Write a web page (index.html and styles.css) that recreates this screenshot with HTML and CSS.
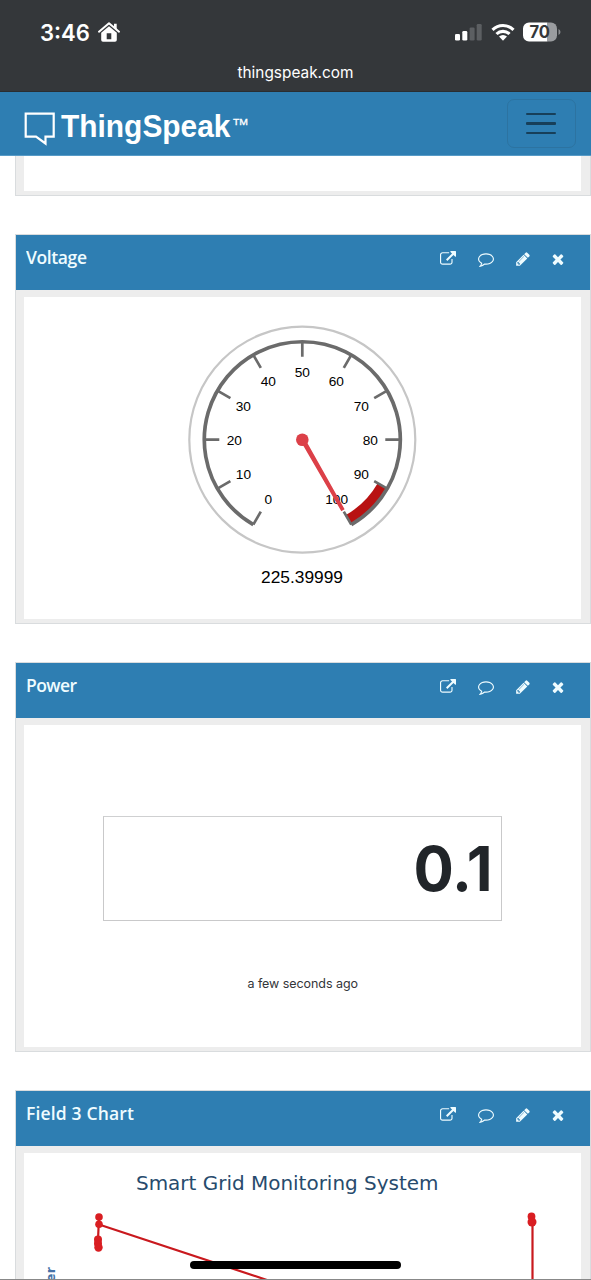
FILE: index.html
```html
<!DOCTYPE html>
<html lang="en">
<head>
<meta charset="utf-8">
<title>ThingSpeak</title>
<link rel="stylesheet" href="styles.css">
</head>
<body>
<svg class="defs" aria-hidden="true">
  <symbol id="i-ext" viewBox="0 0 1792 1792"><path d="M1408 928v320q0 119-84.500 203.500t-203.500 84.500h-832q-119 0-203.500-84.500t-84.500-203.500v-832q0-119 84.500-203.500t203.500-84.500h704q14 0 23 9t9 23v64q0 14-9 23t-23 9h-704q-66 0-113 47t-47 113v832q0 66 47 113t113 47h832q66 0 113-47t47-113v-320q0-14 9-23t23-9h64q14 0 23 9t9 23zm384-864v512q0 26-19 45t-45 19-45-19l-176-176-652 652q-10 10-23 10t-23-10l-114-114q-10-10-10-23t10-23l652-652-176-176q-19-19-19-45t19-45 45-19h512q26 0 45 19t19 45z"/></symbol>
  <symbol id="i-comment" viewBox="0 0 1792 1792"><path d="M896 384q-204 0-381.500 69.500t-282 187.500-104.500 255q0 112 71.500 213.500t201.500 175.500l87 50-27 96q-24 91-70 172 152-63 275-171l43-38 57 6q69 8 130 8 204 0 381.500-69.500t282-187.500 104.500-255-104.500-255-282-187.500-381.500-69.500zm896 512q0 174-120 321.500t-326 233-450 85.500q-70 0-145-8-198 175-460 242-49 14-114 22h-5q-15 0-27-10.500t-16-27.500v-1q-3-4-.5-12t2-10 4.500-9.500l6-9 7-8.500 8-9q7-8 31-34.500t34.500-38 31-39.500 32.500-51 27-59 26-76q-157-89-247.500-220t-90.500-281q0-174 120-321.500t326-233 450-85.500 450 85.500 326 233 120 321.500z"/></symbol>
  <symbol id="i-pencil" viewBox="0 0 1792 1792"><path d="M491 1536l91-91-235-235-91 91v107h128v128h107zm523-928q0-22-22-22-10 0-17 7l-542 542q-7 7-7 17 0 22 22 22 10 0 17-7l542-542q7-7 7-17zm-54-192l416 416-832 832h-416v-416zm683 96q0 53-37 90l-166 166-416-416 166-165q36-38 90-38 53 0 91 38l235 234q37 39 37 91z"/></symbol>
  <symbol id="i-close" viewBox="0 0 1792 1792"><path d="M1490 1322q0 40-28 68l-136 136q-28 28-68 28t-68-28l-294-294-294 294q-28 28-68 28t-68-28l-136-136q-28-28-28-68t28-68l294-294-294-294q-28-28-28-68t28-68l136-136q28-28 68-28t68 28l294 294 294-294q28-28 68-28t68 28l136 136q28 28 28 68t-28 68l-294 294 294 294q28 28 28 68z"/></symbol>
</svg>

<header class="status">
  <div class="status-row">
    <div class="clock">
      <svg class="time" width="52" height="26"><text x="1" y="18.500" textLength="50" lengthAdjust="spacingAndGlyphs">3:46</text></svg>
      <svg class="home" viewBox="0 0 22 20" width="22" height="20"><path d="M1 9.700 11 1.300l10 8.400" fill="none" stroke="#fff" stroke-width="2" stroke-linecap="round" stroke-linejoin="round"/><path d="M16 1.800h2.700v6L16 5.500z" fill="#fff"/><path fill-rule="evenodd" d="M11 4.300 3.200 10.800V18q0 1.800 1.800 1.800h12q1.800 0 1.800-1.800v-7.200zM8.700 11.200h4.600v6H8.700z" fill="#fff"/></svg>
    </div>
    <div class="indicators">
      <svg width="27" height="18" viewBox="0 0 27 18"><rect x="0" y="11" width="5" height="6.500" rx="1.300" fill="#fff"/><rect x="7.300" y="8" width="5" height="9.500" rx="1.300" fill="#fff"/><rect x="14.600" y="4.500" width="5" height="13" rx="1.300" fill="#5c5f62"/><rect x="21.700" y="1" width="5" height="16.500" rx="1.300" fill="#5c5f62"/></svg>
      <svg class="wifi" width="24" height="18" viewBox="0 0 24 18"><g fill="none" stroke="#fff" stroke-width="3.100"><path d="M1.500 6.800a15 15 0 0 1 21 0"/><path d="M5.500 11a9.300 9.300 0 0 1 13 0"/></g><path d="M8 13.500a5.900 5.900 0 0 1 8 0L12 17.700z" fill="#fff"/></svg>
      <svg class="battery" width="38" height="20" viewBox="0 0 38 20"><path d="M6 .5h18.500v19H6a6 6 0 0 1-6-6v-7a6 6 0 0 1 6-6z" fill="#fff"/><path d="M24.500.5H28a6 6 0 0 1 6 6v7a6 6 0 0 1-6 6h-3.500z" fill="#9a9c9f"/><path d="M35.500 7q2 .8 2 3t-2 3z" fill="#8b8d90"/><text x="6.500" y="16" textLength="20.500" lengthAdjust="spacingAndGlyphs">70</text></svg>
    </div>
  </div>
  <div class="address"><svg width="117" height="22"><text x="0.500" y="15.500" textLength="116" lengthAdjust="spacingAndGlyphs">thingspeak.com</text></svg></div>
</header>

<nav class="navbar">
  <svg class="logo" width="230" height="42" viewBox="0 0 230 42">
    <path d="M1.700 5.700h28v23h-8.200v6.800L12 28.700H1.700z" fill="none" stroke="#fff" stroke-width="2.200"/>
    <text class="logo-name" x="37" y="28.700" textLength="169.500" lengthAdjust="spacingAndGlyphs">ThingSpeak</text>
    <text class="logo-tm" x="209" y="16.500" textLength="15" lengthAdjust="spacingAndGlyphs">TM</text>
  </svg>
  <button class="toggler" aria-label="Menu"><span class="bar"></span><span class="bar"></span><span class="bar"></span></button>
</nav>

<main class="page">
  <section class="panel panel-previous"><div class="panel-body"></div></section>

  <section class="panel">
    <div class="panel-head">
      <svg class="title" width="200" height="26"><text x="0" y="18.500" textLength="61">Voltage</text></svg>
      <div class="tools"><svg><use href="#i-ext"/></svg><svg><use href="#i-comment"/></svg><svg><use href="#i-pencil"/></svg><svg class="close"><use href="#i-close"/></svg></div>
    </div>
    <div class="panel-body">
      <svg class="gauge" viewBox="24 297 557 323" width="557" height="323">
        <circle cx="302.300" cy="439.700" r="113" fill="none" stroke="#c6c6c6" stroke-width="2.200"/>
        <g transform="translate(302.300 439.700)">
          <path d="M84.200 48.600A97.200 97.200 0 0 1 48.600 84.200L43.500 75.400A87 87 0 0 0 75.400 43.500z" fill="#b81212"/>
          <g fill="none" stroke="#6b6b6b">
            <path stroke-width="3.700" d="M-49 84.900A98 98 0 1 1 49 84.900"/>
            <path stroke-width="2.700" d="M-49 84.900-41.500 71.900M-84.900 49-71.900 41.500M-98 0H-83M-84.900-49-71.900-41.500M-49-84.900-41.500-71.900M0-98V-83M49-84.900 41.500-71.900M84.900-49 71.900-41.500M98 0H83M84.900 49 71.900 41.500M49 84.900 41.500 71.900"/>
          </g>
          <g class="ticks">
            <text x="-34" y="64.200">0</text><text x="-58.900" y="39">10</text><text x="-68" y="5">20</text><text x="-59" y="-29">30</text><text x="-34" y="-54">40</text><text x="0" y="-63">50</text><text x="34" y="-54">60</text><text x="59" y="-29">70</text><text x="68" y="5">80</text><text x="59" y="39">90</text><text x="34.300" y="64.200">100</text>
          </g>
          <path d="M-1.200.7 39.300 70.500 41.300 69.300 1.800-1z" fill="#dc4048" stroke="#dc4048" stroke-width="1.500"/>
          <circle r="6.300" fill="#dc4048"/>
        </g>
        <text class="reading" x="302" y="582.500" textLength="82" lengthAdjust="spacingAndGlyphs">225.39999</text>
      </svg>
    </div>
  </section>

  <section class="panel">
    <div class="panel-head">
      <svg class="title" width="200" height="26"><text x="0" y="18.500" textLength="51">Power</text></svg>
      <div class="tools"><svg><use href="#i-ext"/></svg><svg><use href="#i-comment"/></svg><svg><use href="#i-pencil"/></svg><svg class="close"><use href="#i-close"/></svg></div>
    </div>
    <div class="panel-body numeric">
      <div class="display"><svg width="90" height="80"><text x="8.500" y="61.500" textLength="79" lengthAdjust="spacingAndGlyphs">0.1</text></svg></div>
      <svg class="ago" width="112" height="20"><text x="0.500" y="14.500" textLength="110.500">a few seconds ago</text></svg>
    </div>
  </section>

  <section class="panel">
    <div class="panel-head">
      <svg class="title" width="200" height="26"><text x="0" y="18.500" textLength="108">Field 3 Chart</text></svg>
      <div class="tools"><svg><use href="#i-ext"/></svg><svg><use href="#i-comment"/></svg><svg><use href="#i-pencil"/></svg><svg class="close"><use href="#i-close"/></svg></div>
    </div>
    <div class="panel-body">
      <svg class="chart" viewBox="24 1153 557 323" width="557" height="323">
        <text class="chart-title" x="136" y="1190" textLength="302.500" lengthAdjust="spacingAndGlyphs">Smart Grid Monitoring System</text>
        <g fill="none" stroke="#c9191e" stroke-width="2.200"><path d="M98 1246V1240L99 1217V1224.500L267 1280 532.500 1366V1217"/></g>
        <g fill="#d91e22"><circle cx="99" cy="1217" r="3.800"/><circle cx="99" cy="1224.300" r="3.800"/><circle cx="98" cy="1239.500" r="4"/><circle cx="98" cy="1243.500" r="4"/><circle cx="98.500" cy="1247.500" r="4.200"/><circle cx="531.500" cy="1216.500" r="3.900"/><circle cx="532" cy="1222" r="4.500"/></g>
        <text class="axis" transform="translate(54.500 1312) rotate(-90)" textLength="45">Power</text>
      </svg>
    </div>
  </section>
</main>
<div class="home-indicator"></div>
<div class="edge"></div>
</body>
</html>
```
FILE: styles.css
```css
* { box-sizing: border-box; }
body { margin: 0; width: 591px; height: 1280px; overflow: hidden; background: #fff; position: relative; display: flex; flex-direction: column; font-family: Inter, sans-serif; }
svg { display: block; flex: none; }
.defs { position: absolute; width: 0; height: 0; }
.status { flex: none; height: 92px; background: #34373a; border-bottom: 1px solid #292e32; color: #fff; }
.status-row { display: flex; justify-content: space-between; padding: 22px 32px 0 39px; height: 62px; }
.status text { fill: #fff; }
.clock { display: flex; gap: 7px; }
.time text { font-size: 23px; font-weight: 600; }
.indicators { display: flex; padding-top: 1px; }
.wifi { margin-left: 9px; }
.battery { margin: -1px -2px 0 8px; }
.battery text { font-size: 17px; font-weight: 700; fill: #34373a; }
.address { display: flex; justify-content: center; font-size: 15.5px; }
.navbar { flex: none; height: 64px; background: #2e7eb2; border-bottom: 1px solid #579bc7; display: flex; justify-content: space-between; padding: 7px 15px 0 24px; }
.logo { margin-top: 9px; }
.logo text { fill: #fff; font-family: "Liberation Sans", Arial, sans-serif; }
.logo-name { font-size: 31.5px; font-weight: 700; }
.logo-tm { font-size: 9.5px; stroke: #fff; stroke-width: 0.3px; }
.toggler { width: 69px; height: 49px; border: 1px solid #2c73a1; border-radius: 7px; background: none; padding: 0 1px 0 0; display: flex; flex-direction: column; align-items: center; justify-content: center; gap: 7.500px; }
.bar { width: 30px; height: 2.300px; background: #173f59; border-radius: 1px; }
.page { flex: 1; min-height: 0; overflow: hidden; display: flex; flex-direction: column; gap: 38px; padding-left: 15px; }
.panel { flex: none; width: 576px; height: 390px; background: #ededed; border: 1px solid #d9dcde; display: flex; flex-direction: column; }
.panel-previous { height: 40px; border-top: 0; }
.panel-previous .panel-body { height: 35px; margin-top: 0; }
.panel-head { height: 55px; background: #2e7eb2; display: flex; justify-content: space-between; padding: 10px 24px 0 10px; flex: none; }
.title text { fill: #effcff; font-family: "Open Sans", sans-serif; font-size: 17.5px; font-weight: 600; }
.tools { display: flex; gap: 21px; padding-top: 6px; }
.tools svg { width: 16px; height: 16px; fill: #effcff; }
.tools svg:first-child { margin-right: 1px; }
.tools .close { margin-left: -2px; }
.panel-body { margin: 7px 9px 0 8px; height: 322px; background: #fff; flex: none; overflow: hidden; }
.gauge text { text-anchor: middle; font-family: "Liberation Sans", Arial, sans-serif; fill: #000; }
.ticks { font-size: 13.7px; }
.reading { font-size: 17.2px; }
.numeric { display: flex; flex-direction: column; align-items: center; padding-top: 91px; }
.display { width: 399px; height: 105px; border: 1px solid #c9c9ca; border-top-color: #cfd0d1; display: flex; justify-content: flex-end; align-items: center; padding-right: 6px; }
.display text { font-size: 62px; font-weight: 700; fill: #212529; }
.ago { margin-top: 52px; }
.ago text { font-size: 12.5px; fill: #333639; }
.chart text { font-family: "DejaVu Sans", Verdana, sans-serif; }
.chart-title { font-size: 19.5px; fill: #274b6d; }
.chart .axis { font-size: 12.5px; font-weight: 700; fill: #4572a7; }
.home-indicator { position: absolute; left: 190px; top: 1261px; width: 211px; height: 8px; border-radius: 4px; background: #000; }
.edge { position: absolute; left: 0; top: 1279px; width: 591px; height: 1px; background: #888; }
```
